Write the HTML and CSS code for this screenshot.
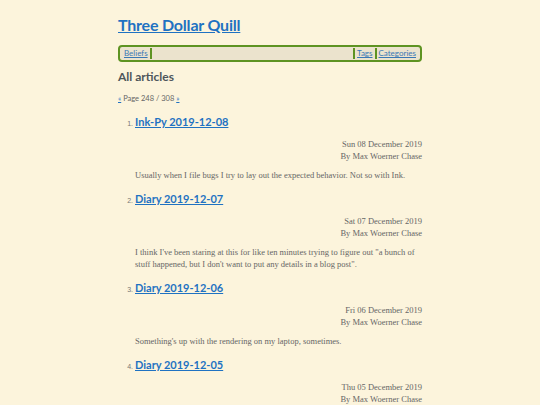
FILE: index.html
```html
<!DOCTYPE html>
<html>
<head>
<meta charset="utf-8">
<link rel="stylesheet" href="styles.css">
</head>
<body>
<div class="page">
  <h1 class="site-title"><a href="#">Three Dollar Quill</a></h1>
  <nav class="nav">
    <a href="#" class="nav-left">Beliefs</a>
    <span class="nav-fill"></span>
    <a href="#" class="nav-right">Tags</a>
    <a href="#" class="nav-right">Categories</a>
  </nav>
  <h2 class="section-title">All articles</h2>
  <p class="pager"><a href="#">«</a> Page 248 / 308 <a href="#">»</a></p>
  <ol class="articles" start="1">
    <li>
      <h3 class="art-title"><a href="#">Ink-Py 2019-12-08</a></h3>
      <div class="meta">Sun 08 December 2019<br>By Max Woerner Chase</div>
      <p class="summary">Usually when I file bugs I try to lay out the expected behavior. Not so with Ink.</p>
    </li>
    <li>
      <h3 class="art-title"><a href="#">Diary 2019-12-07</a></h3>
      <div class="meta">Sat 07 December 2019<br>By Max Woerner Chase</div>
      <p class="summary">I think I've been staring at this for like ten minutes trying to figure out "a bunch of stuff happened, but I don't want to put any details in a blog post".</p>
    </li>
    <li>
      <h3 class="art-title"><a href="#">Diary 2019-12-06</a></h3>
      <div class="meta">Fri 06 December 2019<br>By Max Woerner Chase</div>
      <p class="summary">Something's up with the rendering on my laptop, sometimes.</p>
    </li>
    <li>
      <h3 class="art-title"><a href="#">Diary 2019-12-05</a></h3>
      <div class="meta">Thu 05 December 2019<br>By Max Woerner Chase</div>
    </li>
  </ol>
</div>
</body>
</html>
```
FILE: styles.css
```css
html, body {
  margin: 0;
  padding: 0;
  background: #fcf4dc;
}
body {
  font-family: "Liberation Serif", serif;
  color: #555;
}
.page {
  width: 304px;
  margin: 0 auto;
  padding-top: 14px;
}
a {
  color: #1f72c2;
}
.site-title {
  font-family: "Lato", sans-serif;
  font-size: 16px;
  font-weight: 700;
  letter-spacing: -0.2px;
  margin: 0;
  line-height: 22px;
}
.nav {
  margin-top: 9px;
  display: flex;
  align-items: center;
  border: 2px solid #5e9322;
  border-radius: 4px;
  background: #ebe3cd;
  height: 11px;
  padding: 1px 2px;
  font-family: "Lato", sans-serif;
  font-size: 8px;
  line-height: 11px;
}
.nav a {
  color: #3a78b5;
  padding: 0 2px;
}
.nav-left {
  border-right: 2px solid #5e9322;
}
.nav-right {
  border-left: 2px solid #5e9322;
}
.nav-fill {
  flex: 1;
}
.section-title {
  font-family: "Lato", sans-serif;
  font-size: 12px;
  font-weight: 700;
  color: #4e565b;
  margin: 6px 0 0;
  line-height: 18px;
}
.pager {
  font-family: "Lato", sans-serif;
  font-size: 7.5px;
  color: #666;
  margin: 8px 0 0;
  line-height: 10px;
}
.articles {
  margin: 0;
  padding-left: 17px;
  font-family: "Liberation Sans", sans-serif;
  font-size: 7px;
  color: #777;
}
.articles li {
  margin: 0;
}
.art-title {
  font-family: "Lato", sans-serif;
  font-size: 11px;
  font-weight: 700;
  margin: 10px 0 0;
  line-height: 16px;
}
.meta {
  text-align: right;
  font-family: "Liberation Serif", serif;
  font-size: 8.5px;
  line-height: 12px;
  color: #666;
  margin-top: 8px;
}
.summary {
  font-family: "Liberation Serif", serif;
  font-size: 8.5px;
  line-height: 12px;
  color: #666;
  margin: 7px 0 0;
}
```
